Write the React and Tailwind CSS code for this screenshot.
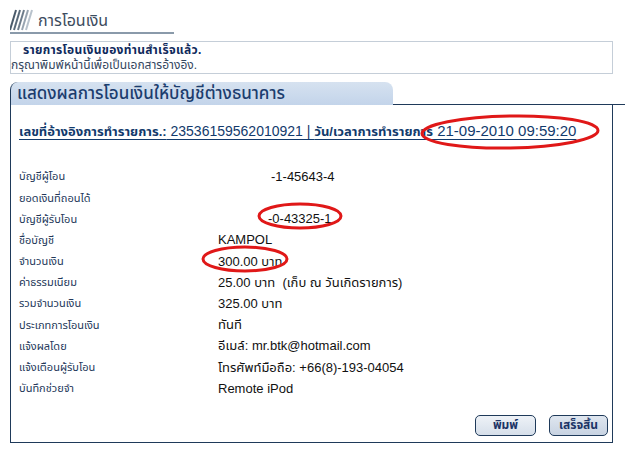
import React from "react";

const rows = [
  ["บัญชีผู้โอน", "-1-45643-4", "pl-[53px]"],
  ["ยอดเงินที่ถอนได้", "", ""],
  ["บัญชีผู้รับโอน", "-0-43325-1", "pl-[50px]"],
  ["ชื่อบัญชี", "KAMPOL", ""],
  ["จำนวนเงิน", "300.00 บาท", ""],
  ["ค่าธรรมเนียม", "25.00 บาท  (เก็บ ณ วันเกิดรายการ)", ""],
  ["รวมจำนวนเงิน", "325.00 บาท", ""],
  ["ประเภทการโอนเงิน", "ทันที", ""],
  ["แจ้งผลโดย", "อีเมล์: mr.btk@hotmail.com", ""],
  ["แจ้งเตือนผู้รับโอน", "โทรศัพท์มือถือ: +66(8)-193-04054", ""],
  ["บันทึกช่วยจำ", "Remote iPod", ""],
];

export default function App() {
  return (
    <div
      className="relative w-[625px] h-[458px] bg-white overflow-hidden"
      style={{ fontFamily: '"Liberation Sans", "Noto Sans Thai", "Noto Sans", "DejaVu Sans", sans-serif' }}
    >
      <div className="pl-[10px] pt-[9px]">
        {/* header */}
        <div className="w-[164px] border-b-2 border-[#8a9aaa] flex items-end h-[25px]">
          <svg width="24" height="22" viewBox="0 0 24 22" className="mb-[1px]">
            {[0, 4, 8, 12, 16].map((x, i) => (
              <line key={i} x1={x + 6} y1="1" x2={x} y2="21" stroke={["#4a5a6a", "#5a6a7a", "#6e7c8a", "#98a4b0", "#b8c2cc"][i]} strokeWidth="2" />
            ))}
          </svg>
          <span className="ml-[4px] text-[16px] leading-[22px] text-[#3c4c5e]">การโอนเงิน</span>
        </div>

        {/* message box */}
        <div className="mt-[7px] w-[603px] h-[33px] border border-[#c5ced8] pt-[1px]">
          <div className="pl-[12px] text-[12px] leading-[15px] font-bold tracking-[0.3px] text-[#0f2a5c]">รายการโอนเงินของท่านสำเร็จแล้ว.</div>
          <div className="text-[12px] leading-[15px] text-[#34465e]">กรุณาพิมพ์หน้านี้เพื่อเป็นเอกสารอ้างอิง.</div>
        </div>

        {/* tab */}
        <div className="mt-[8px] flex items-end">
          <div className="w-[383px] h-[23px] rounded-t-[8px] bg-gradient-to-b from-[#d6e2f0] to-[#c3d4ea] border-l border-[#1f3a5a] pl-[6px] text-[17px] leading-[23px] text-[#1c3d6e] font-medium">
            แสดงผลการโอนเงินให้บัญชีต่างธนาคาร
          </div>
          <div className="flex-1 border-b border-[#1f3a5a] h-0" />
        </div>

        {/* panel */}
        <div className="w-[603px] h-[338px] border border-t-0 border-[#1f3a5a] pl-[8px] pr-[4px] flex flex-col">
          <div className="mt-[17px] text-[#123a6c] underline underline-offset-[3px] whitespace-nowrap leading-[18px]">
            <span className="text-[13px] font-bold">เลขที่อ้างอิงการทำรายการ.:</span>
            <span className="text-[14px]"> 23536159562010921 | </span>
            <span className="text-[13px] font-bold">วัน/เวลาการทำรายการ</span>
            <span className="text-[15px]"> 21-09-2010 09:59:20</span>
          </div>

          <div className="mt-[25px] flex flex-col">
            {rows.map(([l, v, pad], i) => (
              <div key={i} className="flex h-[21.2px] items-center">
                <div className="w-[199px] text-[11px] text-[#24385a] whitespace-nowrap">{l}</div>
                <div className={`text-[13px] text-[#111] whitespace-pre ${pad}`}>{v}</div>
              </div>
            ))}
          </div>

          <div className="mt-auto mb-[6px] flex justify-end gap-[13px]">
            <button className="w-[61px] h-[21px] rounded-[5px] border border-[#1f3a5a] bg-gradient-to-b from-[#eef2f7] to-[#d6dfea] text-[12px] font-bold text-[#1c3466] leading-[19px]">พิมพ์</button>
            <button className="w-[59px] h-[21px] rounded-[5px] border border-[#1f3a5a] bg-gradient-to-b from-[#dfe6ef] to-[#c8d3e2] text-[12px] font-bold text-[#1c3466] leading-[19px]">เสร็จสิ้น</button>
          </div>
        </div>
      </div>

      {/* red annotation circles */}
      <svg className="absolute left-0 top-0 pointer-events-none" width="625" height="458">
        <ellipse cx="510" cy="132" rx="88" ry="16" fill="none" stroke="#e01818" strokeWidth="3" transform="rotate(-1 510 132)" />
        <ellipse cx="300" cy="216" rx="41" ry="12" fill="none" stroke="#e01818" strokeWidth="3" />
        <ellipse cx="245" cy="259" rx="42" ry="12" fill="none" stroke="#e01818" strokeWidth="3" />
      </svg>
    </div>
  );
}
